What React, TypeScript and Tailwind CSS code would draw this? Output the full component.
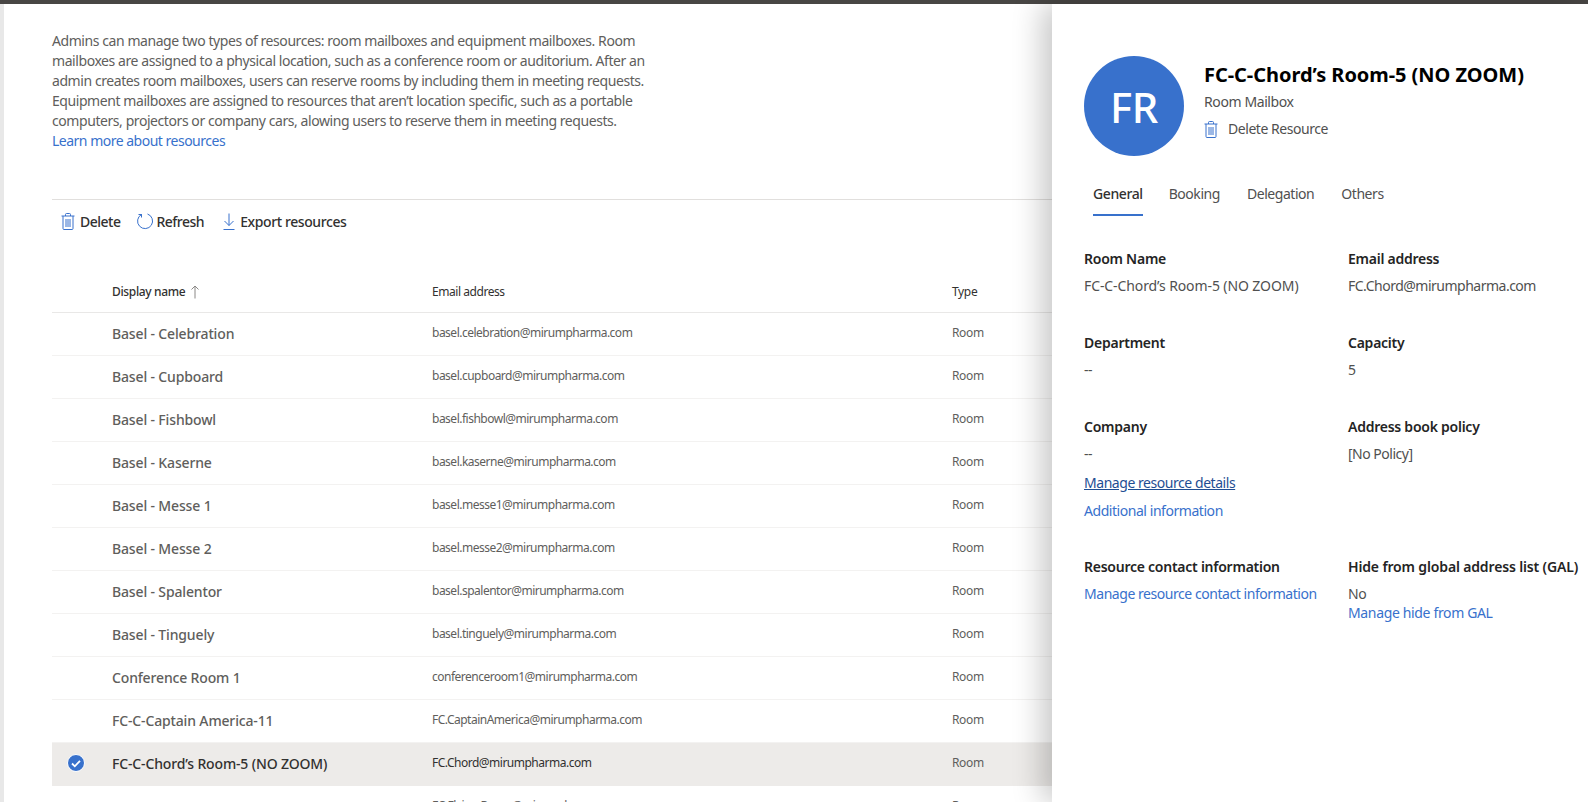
const rows = [
  ['Basel - Celebration', 'basel.celebration@mirumpharma.com'],
  ['Basel - Cupboard', 'basel.cupboard@mirumpharma.com'],
  ['Basel - Fishbowl', 'basel.fishbowl@mirumpharma.com'],
  ['Basel - Kaserne', 'basel.kaserne@mirumpharma.com'],
  ['Basel - Messe 1', 'basel.messe1@mirumpharma.com'],
  ['Basel - Messe 2', 'basel.messe2@mirumpharma.com'],
  ['Basel - Spalentor', 'basel.spalentor@mirumpharma.com'],
  ['Basel - Tinguely', 'basel.tinguely@mirumpharma.com'],
  ['Conference Room 1', 'conferenceroom1@mirumpharma.com'],
  ['FC-C-Captain America-11', 'FC.CaptainAmerica@mirumpharma.com'],
  ['FC-C-Chord’s Room-5 (NO ZOOM)', 'FC.Chord@mirumpharma.com'],
  ['', 'FC.Flying.Room@mirumpharma.com'],
];

function TrashIcon({ className }: { className: string }) {
  return (
    <svg viewBox="0 0 14 17" fill="none" stroke="#3871cc" strokeWidth="1" className={className}>
      <path d="M0.5 3h13M2 3v12.5a1 1 0 0 0 1 1h8a1 1 0 0 0 1-1V3M4.5 3V1.500a1 1 0 0 1 1-1h3a1 1 0 0 1 1 1V3M5 6v8M7 6v8M9 6v8" />
    </svg>
  );
}

function Field({ label, value, wide }: { label: string; value: string; wide?: boolean }) {
  return (
    <div>
      <div className="text-[14px] leading-5 font-semibold tracking-[-0.25px] text-[#242424]">{label}</div>
      <div className={`mt-[7px] text-[14px] leading-5 text-[#505050] ${wide ? 'tracking-[-0.1px]' : 'tracking-[-0.5px]'}`}>{value}</div>
    </div>
  );
}

export default function App() {
  return (
    <div className="relative h-[802px] w-[1588px] overflow-hidden bg-white font-['Noto_Sans',sans-serif] tracking-[-0.35px]">
      <div className="h-1 bg-[#484644]" />
      <div className="flex h-[798px]">
        <div className="w-1 bg-[#e8e8e8]" />
        <main className="flex-1 pl-12 pt-[27px]">
          <p className="w-[610px] text-[14px] leading-5 tracking-[-0.43px] text-[#605e5c]">
            Admins can manage two types of resources: room mailboxes and equipment mailboxes. Room mailboxes are assigned to a physical location, such as a conference room or auditorium. After an admin creates room mailboxes, users can reserve rooms by including them in meeting requests. Equipment mailboxes are assigned to resources that aren’t location specific, such as a portable computers, projectors or company cars, alowing users to reserve them in meeting requests.
            <br />
            <a className="tracking-[-0.5px] text-[#3871cc]">Learn more about resources</a>
          </p>

          <div className="mt-[48px] border-t border-[#e1dfdd]">
            <div className="flex h-[42px] items-center pl-[9px] text-[14px] font-medium tracking-[-0.5px] text-[#323130]">
              <TrashIcon className="h-[17px] w-[14px]" />
              <span className="ml-[5px]">Delete</span>
              <svg viewBox="0 0 17 17" fill="none" stroke="#3871cc" strokeWidth="1" className="ml-[17px] h-[17px] w-[17px]">
                <path d="M4.500 1.500A7.500 7.500 0 1 0 10.500 1M4.500 1.200v3.300M1.500 1.500h3" />
              </svg>
              <span className="ml-[2px]">Refresh</span>
              <svg viewBox="0 0 14 17" fill="none" stroke="#3871cc" strokeWidth="1" className="ml-[18px] h-[17px] w-[14px]">
                <path d="M7 0.500v12M2.500 8l4.500 4.500L11.500 8M1.500 16.500h11" />
              </svg>
              <span className="ml-1 tracking-[-0.4px]">Export resources</span>
            </div>
          </div>

          <div className="mt-[26px] flex h-[45px] items-center border-b border-[#e9e8e7] pt-1 text-[12px] text-[#323130]">
            <div className="flex w-[380px] items-center pl-[60px] font-medium">
              Display name
              <svg viewBox="0 0 10 14" fill="none" stroke="#8a8886" strokeWidth="1" className="ml-[5px] h-[14px] w-[10px]">
                <path d="M5 13.500V1M1.500 4.500L5 1l3.500 3.500" />
              </svg>
            </div>
            <div className="w-[520px] tracking-[-0.45px]">Email address</div>
            <div>Type</div>
          </div>

          {rows.map(([name, email], i) => (
            <div
              key={email}
              className={`flex h-[43px] items-center border-b text-[#605e5c] ${i === 10 ? 'border-[#edebe9] bg-[#edebe9]' : 'border-[#f3f2f1]'}`}
            >
              <div className={`relative flex w-[380px] items-center pl-[60px] pb-0.5 text-[14px] font-medium tracking-[-0.15px] ${i === 10 ? 'text-[#323130]' : ''}`}>
                {i === 10 && (
                  <svg viewBox="0 0 18 18" className="absolute left-[15px] h-[18px] w-[18px]">
                    <circle cx="9" cy="9" r="8.500" fill="#3871cc" stroke="#fff" />
                    <path d="M5 9.500l2.800 2.800L13 6.800" fill="none" stroke="#fff" strokeWidth="1.800" />
                  </svg>
                )}
                {name}
              </div>
              <div className={`w-[520px] -translate-y-px text-[12px] tracking-[-0.5px] ${i === 10 ? 'text-[#323130]' : ''}`}>{email}</div>
              <div className="-translate-y-px text-[12px]">Room</div>
            </div>
          ))}
        </main>
      </div>

      <aside className="absolute inset-y-0 right-0 top-1 w-[536px] bg-white pl-8 shadow-[-10px_0_28px_rgba(0,0,0,0.22)]">
        <div className="flex pt-[52px]">
          <div className="flex h-[100px] w-[100px] items-center justify-center rounded-full bg-[#3871cc] text-[42px] font-medium text-white">FR</div>
          <div className="ml-[20px] pt-[5px]">
            <h1 className="text-[20px] leading-7 font-bold tracking-[-0.05px] text-black">FC-C-Chord’s Room-5 (NO ZOOM)</h1>
            <div className="mt-[3px] text-[14px] leading-5 tracking-[-0.4px] text-[#505050]">Room Mailbox</div>
            <div className="mt-[7px] flex items-center text-[14px] leading-5 tracking-[-0.45px] text-[#505050]">
              <TrashIcon className="h-[17px] w-[14px]" />
              <span className="ml-[10px]">Delete Resource</span>
            </div>
          </div>
        </div>

        <div className="mt-[23px] flex gap-[26px] pl-[9px] text-[14px] tracking-[-0.45px] text-[#505050]">
          <div className="h-[37px] border-b-2 border-[#3871cc] pt-[4px] font-medium tracking-[-0.4px] text-[#323130]">General</div>
          <div className="pt-[4px]">Booking</div>
          <div className="pt-[4px] pl-px">Delegation</div>
          <div className="pt-[4px] pl-px">Others</div>
        </div>

        <div className="mt-[33px] grid grid-cols-[264px_1fr]">
          <Field label="Room Name" value="FC-C-Chord’s Room-5 (NO ZOOM)" wide />
          <Field label="Email address" value="FC.Chord@mirumpharma.com" />
          <div className="mt-[37px]"><Field label="Department" value="--" /></div>
          <div className="mt-[37px]"><Field label="Capacity" value="5" /></div>
          <div className="mt-[37px]">
            <Field label="Company" value="--" />
            <a className="mt-[9px] block text-[14px] leading-5 tracking-[-0.45px] text-[#1f4e93] underline">Manage resource details</a>
            <a className="mt-2 block text-[14px] leading-5 tracking-[-0.45px] text-[#3871cc]">Additional information</a>
          </div>
          <div className="mt-[37px]"><Field label="Address book policy" value="[No Policy]" /></div>
          <div className="mt-[36px]">
            <div className="text-[14px] leading-5 font-semibold tracking-[-0.25px] text-[#242424]">Resource contact information</div>
            <a className="mt-[7px] block text-[14px] leading-5 tracking-[-0.45px] text-[#3871cc]">Manage resource contact information</a>
          </div>
          <div className="mt-[36px]">
            <div className="text-[14px] leading-5 font-semibold tracking-[-0.15px] text-[#242424]">Hide from global address list (GAL)</div>
            <div className="mt-[7px] text-[14px] leading-5 text-[#505050]">No</div>
            <a className="-mt-px block text-[14px] leading-5 text-[#3871cc]">Manage hide from GAL</a>
          </div>
        </div>
      </aside>
    </div>
  );
}
